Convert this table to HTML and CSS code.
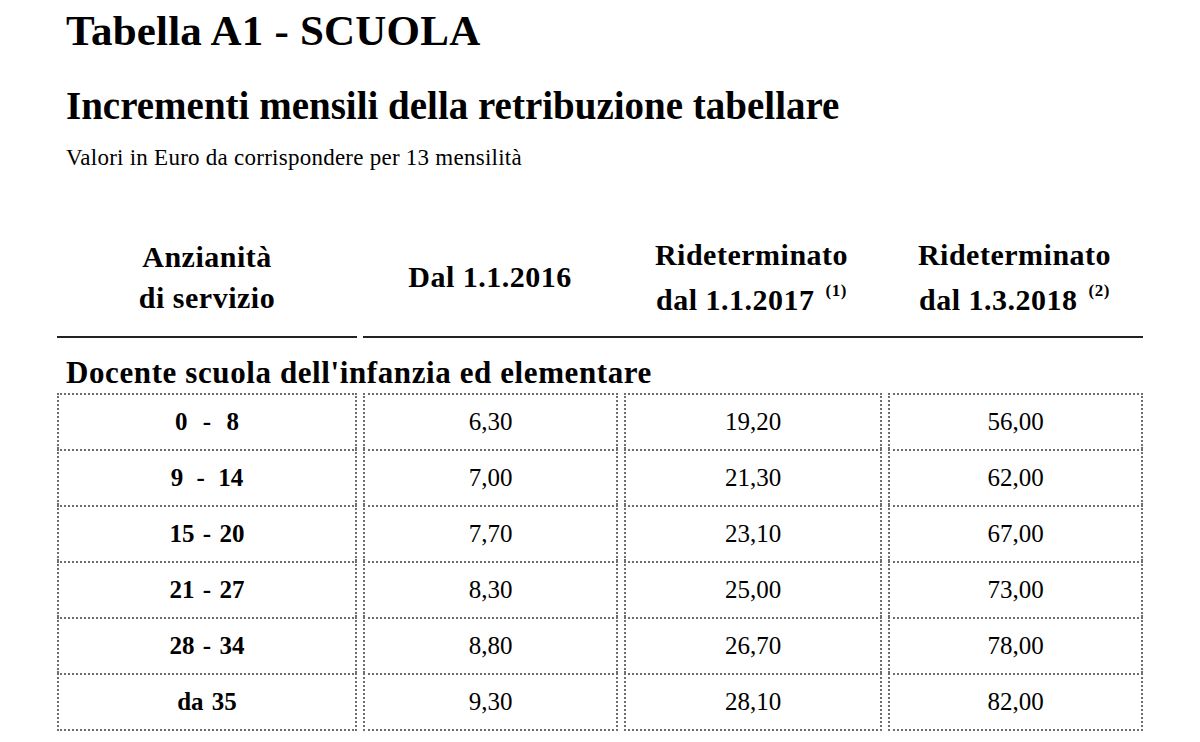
FILE: index.html
```html
<!DOCTYPE html>
<html lang="it">
<head>
<meta charset="utf-8">
<title>Tabella A1 - SCUOLA</title>
<link rel="stylesheet" href="styles.css">
</head>
<body>
<div class="page">
  <h1 class="title">Tabella A1 - SCUOLA</h1>
  <h2 class="subtitle">Incrementi mensili della retribuzione tabellare</h2>
  <p class="note">Valori in Euro da corrispondere per 13 mensilità</p>

  <div class="head">
    <div class="hcell hkey">
      <span>Anzianità</span>
      <span>di servizio</span>
    </div>
    <div class="hgroup">
      <div class="hcell hsingle"><span>Dal 1.1.2016</span></div>
      <div class="hcell hdouble">
        <span>Rideterminato</span>
        <span>dal 1.1.2017 <sup>(1)</sup></span>
      </div>
      <div class="hcell hdouble">
        <span>Rideterminato</span>
        <span>dal 1.3.2018 <sup>(2)</sup></span>
      </div>
    </div>
  </div>

  <h3 class="section">Docente scuola dell'infanzia ed elementare</h3>

  <div class="grid">
    <div class="cell key wide">0 - 8</div><div class="cell">6,30</div><div class="cell">19,20</div><div class="cell">56,00</div>
    <div class="cell key mid">9 - 14</div><div class="cell">7,00</div><div class="cell">21,30</div><div class="cell">62,00</div>
    <div class="cell key">15 - 20</div><div class="cell">7,70</div><div class="cell">23,10</div><div class="cell">67,00</div>
    <div class="cell key">21 - 27</div><div class="cell">8,30</div><div class="cell">25,00</div><div class="cell">73,00</div>
    <div class="cell key">28 - 34</div><div class="cell">8,80</div><div class="cell">26,70</div><div class="cell">78,00</div>
    <div class="cell key last">da 35</div><div class="cell last">9,30</div><div class="cell last">28,10</div><div class="cell last">82,00</div>
  </div>
</div>
</body>
</html>
```
FILE: styles.css
```css
html, body {
  margin: 0;
  padding: 0;
  background: #ffffff;
}

body {
  font-family: "Liberation Serif", "Times New Roman", serif;
  color: #000000;
}

.page {
  width: 1086px;
  padding: 9px 0 0 57px;
}

.title {
  margin: 0 0 0 9px;
  font-size: 43px;
  line-height: 43px;
  letter-spacing: 0.2px;
  font-weight: bold;
}

.subtitle {
  margin: 34px 0 0 9px;
  font-size: 39px;
  line-height: 39px;
  font-weight: bold;
}

.note {
  margin: 21px 0 0 9px;
  font-size: 23px;
  line-height: 23px;
  letter-spacing: 0.25px;
  font-weight: normal;
}

.head {
  margin-top: 48px;
  display: flex;
  gap: 6px;
  font-weight: bold;
  font-size: 30px;
  letter-spacing: 0.5px;
}

.hkey {
  width: 300px;
  border-bottom: 2px solid #222222;
}

.hgroup {
  width: 780px;
  display: flex;
  gap: 6px;
  border-bottom: 2px solid #222222;
}

.hcell {
  height: 119px;
  display: flex;
  flex-direction: column;
  align-items: center;
  justify-content: center;
  text-align: center;
}

.hkey span {
  line-height: 41px;
}

.hsingle {
  width: 255px;
}

.hdouble {
  width: 258px;
}

.hdouble span {
  line-height: 45px;
}

.hcell sup {
  font-size: 17px;
  line-height: 0;
  vertical-align: 14px;
  margin-left: 3px;
}

.section {
  margin: 19px 0 0 9px;
  font-size: 31px;
  line-height: 31px;
  letter-spacing: 0.6px;
  font-weight: bold;
}

.grid {
  margin-top: 5px;
  display: grid;
  grid-template-columns: 300px 255px 258px 255px;
  column-gap: 6px;
}

.cell {
  box-sizing: border-box;
  height: 56px;
  border: 2px dotted #6e6e6e;
  border-bottom: none;
  display: flex;
  align-items: center;
  justify-content: center;
  font-size: 25px;
  white-space: pre;
}

.cell.last {
  height: 58px;
  border-bottom: 2px dotted #6e6e6e;
}

.key {
  font-weight: bold;
  word-spacing: 2px;
}

.key.wide {
  word-spacing: 9px;
}

.key.mid {
  word-spacing: 7px;
}
```
